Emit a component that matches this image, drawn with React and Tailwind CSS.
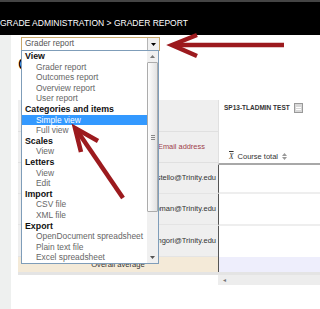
const menuItems = [
  { label: "View", group: true },
  { label: "Grader report" },
  { label: "Outcomes report" },
  { label: "Overview report" },
  { label: "User report" },
  { label: "Categories and items", group: true },
  { label: "Simple view", selected: true },
  { label: "Full view" },
  { label: "Scales", group: true },
  { label: "View" },
  { label: "Letters", group: true },
  { label: "View" },
  { label: "Edit" },
  { label: "Import", group: true },
  { label: "CSV file" },
  { label: "XML file" },
  { label: "Export", group: true },
  { label: "OpenDocument spreadsheet" },
  { label: "Plain text file" },
  { label: "Excel spreadsheet" },
];

const emails = [
  { text: "jcostello@Trinity.edu", h: "h-[31px]" },
  { text: "jchapman@Trinity.edu", h: "h-[31px]" },
  { text: "mmangori@Trinity.edu", h: "h-[32px]" },
];

function Tri({ up, className }) {
  return (
    <svg width="5" height="3" viewBox="0 0 5 3" className={className}>
      <path d={up ? "M0 3 L2.5 0 L5 3 Z" : "M0 0 L5 0 L2.5 3 Z"} fill="currentColor" />
    </svg>
  );
}

function GradeSelect() {
  return (
    <>
      <div className="absolute left-[21px] top-[37px] flex h-[14px] w-[139px] items-center border border-[#c9a86a] bg-white">
        <span className="flex-1 pl-[3px] text-[8.2px] leading-none text-[#555]">Grader report</span>
        <div className="flex h-full w-[12px] items-center justify-center border-l border-[#b5b5b5] bg-[#f0f0f0] text-black">
          <Tri />
        </div>
      </div>

      <div className="absolute left-[21px] top-[50px] flex h-[214px] w-[138px] border border-[#7f9db9] bg-white">
        <ul className="flex-1">
          {menuItems.map((item, i) => (
            <li
              key={i}
              className={
                "h-[10.6px] whitespace-nowrap leading-[10.6px] " +
                (item.group
                  ? "pl-[3px] text-[8.8px] font-bold text-[#111]"
                  : item.selected
                  ? "bg-[#3399ff] pl-[14px] text-[8.4px] text-white"
                  : "pl-[14px] text-[8.4px] text-[#666]")
              }
            >
              {item.label}
            </li>
          ))}
        </ul>
        <div className="flex w-[11px] flex-col bg-[#f0f0f0]">
          <div className="flex h-[11px] items-center justify-center text-[#777]">
            <Tri up />
          </div>
          <div className="flex h-[150px] items-center justify-center rounded-[1px] border border-[#acacac] bg-gradient-to-r from-[#fdfdfd] to-[#e2e2e2]">
            <div className="flex flex-col gap-[1px]">
              <div className="h-px w-[4px] bg-[#888]" />
              <div className="h-px w-[4px] bg-[#888]" />
              <div className="h-px w-[4px] bg-[#888]" />
            </div>
          </div>
          <div className="flex-1" />
          <div className="flex h-[11px] items-center justify-center text-[#555]">
            <Tri />
          </div>
        </div>
      </div>
    </>
  );
}

function Arrows() {
  return (
    <svg className="pointer-events-none absolute inset-0" width="320" height="309" viewBox="0 0 320 309">
      <g stroke="#9c1a1e" strokeWidth="4.5" fill="none" strokeLinecap="butt" strokeLinejoin="miter">
        <path d="M176 45 L284 45" />
        <path d="M197 35 L172 45 L197 56" />
        <path d="M123 198 L78 132" />
        <path d="M81 152 L75 128 L98 141" />
      </g>
    </svg>
  );
}

export default function App() {
  return (
    <div className="relative h-[309px] w-[320px] overflow-hidden bg-white font-['Liberation_Sans',Arial,sans-serif]">
      <header className="h-[35px] border-t-2 border-[#444] bg-black pt-[17px]">
        <h1 className="whitespace-nowrap text-[8.5px] leading-[8.5px] text-white">
          GRADE ADMINISTRATION &gt; GRADER REPORT
        </h1>
      </header>

      <div className="flex h-[274px]">
        <div className="w-[11px] shrink-0 bg-[#eef0ef]" />
        <div className="min-w-0 flex-1 overflow-hidden pl-[7px]">
          <h2 className="mt-[21px] whitespace-nowrap text-[16.5px] leading-[16px] text-black">Grader report</h2>

          <div className="mt-[28px] flex w-[302px]">
            <div className="w-[200px] shrink-0">
              <div className="h-[32px] border-b border-[#e0e0e0] bg-[#efefef]" />
              <div className="flex h-[31px] items-center border-b border-[#e0e0e0] bg-[#efefef] pl-[140px] text-[7.4px] text-[#a0404a]">
                Email address
              </div>
              {emails.map((e) => (
                <div
                  key={e.text}
                  className={"flex items-center justify-end border-b border-[#e4e4e4] bg-[#efefef] pr-[2px] text-[7.5px] text-[#333] " + e.h}
                >
                  {e.text}
                </div>
              ))}
              <div className="flex h-[15px] items-center justify-center bg-[#f4ead8] text-[7.6px] text-[#333]">
                Overall average
              </div>
              <div className="h-[3px] bg-[#e4e4e4]" />
            </div>

            <div className="w-[102px] shrink-0">
              <div className="flex h-[65px] flex-col justify-between border-b-2 border-l border-b-[#a8a8a8] border-l-[#e0e0e0]">
                <div className="flex items-start gap-[4px] pl-[5px] pt-[3px]">
                  <span className="whitespace-nowrap pt-[1px] text-[6.5px] font-bold leading-[8px] text-[#333]">
                    SP13-TLADMIN TEST
                  </span>
                  <div className="flex h-[10px] w-[9px] flex-col justify-center gap-[1px] border border-[#999] bg-[#d8d8d8] px-[1px]">
                    <div className="h-px bg-white" />
                    <div className="h-px bg-white" />
                  </div>
                </div>
                <div className="flex items-end gap-[4px] pb-[2px] pl-[10px] text-[7.5px] leading-[8px] text-[#333]">
                  <span className="font-['Liberation_Serif',serif] italic overline">X</span>
                  <span className="whitespace-nowrap">Course total</span>
                  <span className="flex flex-col gap-[1px] pb-[1px] text-[#999]">
                    <Tri up />
                    <Tri />
                  </span>
                </div>
              </div>
              <div className="h-[29px] border-b-2 border-l border-b-[#eeeeee] border-l-[#555]" />
              <div className="h-[32px] border-b-2 border-l border-b-[#eeeeee] border-l-[#555]" />
              <div className="h-[31px] border-l border-l-[#555]" />
              <div className="h-[15px] border-l border-l-[#555] bg-[#eeeefc]" />
              <div className="h-[3px] bg-[#e4e4e4]" />
              <div className="flex h-[10px] items-center bg-[#ededed] pl-[5px] text-[6px] text-[#777]">◂</div>
            </div>
          </div>
        </div>
      </div>

      <GradeSelect />
      <Arrows />
    </div>
  );
}
